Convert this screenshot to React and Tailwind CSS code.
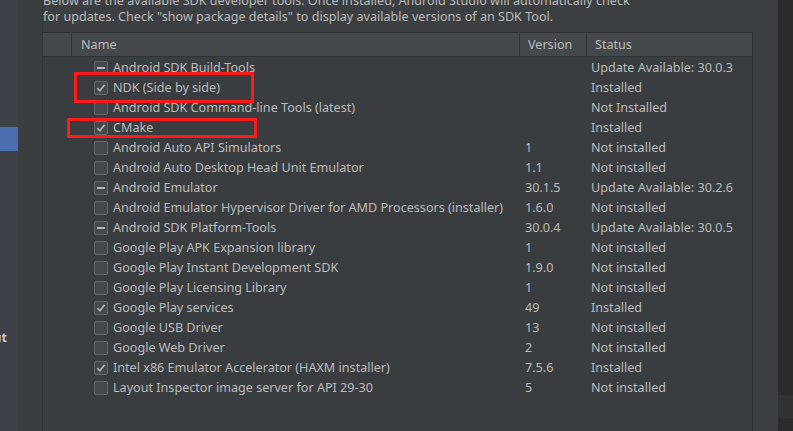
const rows = [
  { name: "Android SDK Build-Tools", state: "partial", version: "", status: "Update Available: 30.0.3" },
  { name: "NDK (Side by side)", state: "checked", version: "", status: "Installed" },
  { name: "Android SDK Command-line Tools (latest)", state: "none", version: "", status: "Not Installed" },
  { name: "CMake", state: "checked", version: "", status: "Installed" },
  { name: "Android Auto API Simulators", state: "none", version: "1", status: "Not installed" },
  { name: "Android Auto Desktop Head Unit Emulator", state: "none", version: "1.1", status: "Not installed" },
  { name: "Android Emulator", state: "partial", version: "30.1.5", status: "Update Available: 30.2.6" },
  { name: "Android Emulator Hypervisor Driver for AMD Processors (installer)", state: "none", version: "1.6.0", status: "Not installed" },
  { name: "Android SDK Platform-Tools", state: "partial", version: "30.0.4", status: "Update Available: 30.0.5" },
  { name: "Google Play APK Expansion library", state: "none", version: "1", status: "Not installed" },
  { name: "Google Play Instant Development SDK", state: "none", version: "1.9.0", status: "Not installed" },
  { name: "Google Play Licensing Library", state: "none", version: "1", status: "Not installed" },
  { name: "Google Play services", state: "checked", version: "49", status: "Installed" },
  { name: "Google USB Driver", state: "none", version: "13", status: "Not installed" },
  { name: "Google Web Driver", state: "none", version: "2", status: "Not installed" },
  { name: "Intel x86 Emulator Accelerator (HAXM installer)", state: "checked", version: "7.5.6", status: "Installed" },
  { name: "Layout Inspector image server for API 29-30", state: "none", version: "5", status: "Not installed" },
];

const Checkbox = ({ state }) => (
  <span className="flex h-[14px] w-[14px] shrink-0 items-center justify-center rounded-[2px] border border-[#64686b] bg-[#45494b]">
    {state === "checked" && (
      <svg width="10" height="10" viewBox="0 0 10 10">
        <path d="M1.5 5.2 L4 7.8 L8.6 1.8" fill="none" stroke="#b0b2b4" strokeWidth="1.7" />
      </svg>
    )}
    {state === "partial" && <span className="h-[2px] w-[8px] bg-[#b0b2b4]" />}
  </span>
);

const App = () => {
  return (
    <div
      className="relative flex h-[431px] w-[793px] overflow-hidden bg-[#3c3f41] text-[12.6px] text-[#bbbbbb]"
      style={{ fontFamily: '"Noto Sans", "Open Sans", sans-serif' }}
    >
      {/* left settings tree, clipped */}
      <div className="relative w-[18px] shrink-0 bg-[#3d4249]">
        <div className="absolute left-0 top-[127px] h-[24px] w-[18px] bg-[#4b6eaf]" />
        <div className="absolute right-[11px] top-[329px] whitespace-nowrap font-bold leading-[18px] text-[#c8c8c8]">
          Layout
        </div>
      </div>
      <div className="w-[25px] shrink-0 border-r border-[#323436] bg-[#3b3e41]" />

      <div className="w-[735px] shrink-0">
        <div className="-mt-[7px] whitespace-nowrap leading-[16px]">
          <p>Below are the available SDK developer tools. Once installed, Android Studio will automatically check</p>
          <p>for updates. Check "show package details" to display available versions of an SDK Tool.</p>
        </div>

        <div className="mt-[7px] w-[710px] border-r border-t border-[#2f3234] bg-[#3a3d40]">
          <div className="flex h-[24px] border-b border-[#2f3234] bg-[#44484b]">
            <div className="w-[29px] border-r border-[#313335]" />
            <div className="flex w-[448px] items-center border-r border-[#313335] pl-[9px] pt-[1px]">Name</div>
            <div className="flex w-[67px] items-center border-r border-[#313335] pl-[8px] pt-[1px]">Version</div>
            <div className="flex flex-1 items-center pl-[8px] pt-[1px]">Status</div>
          </div>
          <div className="h-[400px] pt-[1px]">
            {rows.map((row) => (
              <div key={row.name} className="flex h-[20px] items-center whitespace-nowrap">
                <div className="w-[29px]" />
                <div className="flex w-[448px] items-center gap-[5px] pl-[22px]">
                  <Checkbox state={row.state} />
                  <span>{row.name}</span>
                </div>
                <div className="w-[67px] pl-[5px]">{row.version}</div>
                <div className="flex-1 pl-[4px]">{row.status}</div>
              </div>
            ))}
          </div>
        </div>
      </div>

      <div className="flex flex-1 flex-col bg-[#2b2b2b]">
        <div className="mt-[395px] h-[23px] bg-[#313233]" />
      </div>

      {/* red annotation boxes */}
      <div className="pointer-events-none absolute left-[74px] top-[72px] h-[31px] w-[180px] border-[3px] border-[#ff1a1a]" />
      <div className="pointer-events-none absolute left-[67px] top-[118px] h-[20px] w-[190px] border-[3px] border-[#ff1a1a]" />
    </div>
  );
};

export default App;
